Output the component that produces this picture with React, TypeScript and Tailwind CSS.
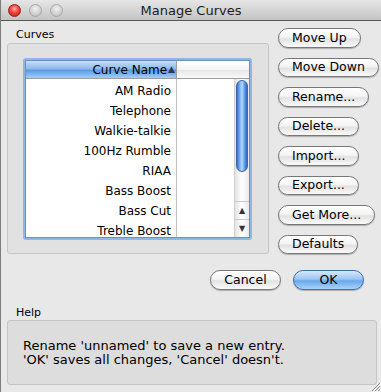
import React from "react"

const curves = ["AM Radio", "Telephone", "Walkie-talkie", "100Hz Rumble", "RIAA", "Bass Boost", "Bass Cut", "Treble Boost"]
const sideButtons = ["Move Up", "Move Down", "Rename...", "Delete...", "Import...", "Export...", "Get More...", "Defaults"]

function AquaButton({ label, primary = false, className = "" }: { label: string; primary?: boolean; className?: string }) {
  return (
    <button
      className={
        "h-[20px] whitespace-nowrap rounded-full border px-[13px] text-[12.5px] leading-none text-black shadow-[0_1px_1px_rgba(0,0,0,0.25)] " +
        (primary
          ? "border-[#3f6ea8] bg-[linear-gradient(to_bottom,#d6e8fb_0%,#9cc6f2_45%,#6aa8ea_55%,#a9d3fb_100%)] "
          : "border-[#777] bg-[linear-gradient(to_bottom,#ffffff_0%,#f4f4f4_45%,#e2e2e2_55%,#fafafa_100%)] ") +
        className
      }
    >
      {label}
    </button>
  )
}

function Light({ red = false }: { red?: boolean }) {
  return (
    <div
      className={
        "h-[13px] w-[13px] rounded-full border " +
        (red
          ? "border-[#9a1d1d] bg-[radial-gradient(circle_at_50%_35%,#ffb0a8_0%,#f2453a_45%,#b51a14_100%)]"
          : "border-[#a8a8a8] bg-[radial-gradient(circle_at_50%_35%,#f2f2f2_0%,#d4d4d4_50%,#b8b8b8_100%)]")
      }
    />
  )
}

export default function App() {
  return (
    <div
      className="relative h-[392px] w-[381px] overflow-hidden border-l border-[#7c7c7c] bg-[#e8e8e8] text-black"
      style={{ fontFamily: '"DejaVu Sans", "Liberation Sans", sans-serif' }}
    >
      {/* Title bar */}
      <div className="relative flex h-[21px] items-center border-b border-[#575757] bg-[linear-gradient(to_bottom,#e6e6e6,#c4c4c4)]">
        <div className="ml-[7px] flex gap-[8px]">
          <Light red />
          <Light />
          <Light />
        </div>
        <div className="absolute inset-x-0 top-[3px] text-center text-[13px] leading-[15px] text-[#1c1c1c]">Manage Curves</div>
      </div>

      <div className="flex h-[233px] pl-[6px]">
        {/* Curves group */}
        <div className="w-[262px]">
          <div className="ml-[9px] mt-[5px] h-[17px] text-[11px] leading-[17px]">Curves</div>
          <div className="h-[211px] rounded-[3px] border border-[#c6c6c6] bg-[#e1e1e1] px-[15px] pt-[14px]">
            <div className="h-[182px] w-[229px] rounded-[3px] bg-[#8fb6e4] p-[2px]">
              <div className="flex h-full flex-col border border-[#6e8fb8] bg-white">
                {/* Header */}
                <div className="flex h-[18px] border-b border-[#9e9e9e]">
                  <div className="flex w-[151px] items-center justify-end border-r border-[#9e9e9e] bg-[linear-gradient(to_bottom,#c8def6_0%,#8dbaec_45%,#5c9be3_55%,#a5cdf7_100%)] pr-[1px] text-[12px] leading-none">
                    Curve Name<span className="ml-[1px] text-[9px] text-[#2a3a55]">▲</span>
                  </div>
                  <div className="flex-1 bg-[linear-gradient(to_bottom,#ffffff,#f3f3f3_50%,#e6e6e6_51%,#f8f8f8)]" />
                </div>
                {/* Rows */}
                <div className="flex flex-1 overflow-hidden">
                  <div className="w-[151px] border-r border-[#c3c3c3] pt-[2px]">
                    {curves.map((c) => (
                      <div key={c} className="h-[20px] whitespace-nowrap pr-[5px] text-right text-[12px] leading-[20px]">
                        {c}
                      </div>
                    ))}
                  </div>
                  <div className="flex-1" />
                  {/* Scrollbar */}
                  <div className="flex w-[15px] flex-col border-l border-[#d0d0d0] bg-[linear-gradient(to_right,#e4e4e4,#fbfbfb_40%,#fbfbfb_60%,#e8e8e8)]">
                    <div className="mx-auto mt-[1px] h-[92px] w-[12px] rounded-full border border-[#3a6aa8] bg-[linear-gradient(to_right,#2f6fd0_0%,#8cc0f5_35%,#b5daff_50%,#5f9ee8_75%,#2b66c2_100%)]" />
                    <div className="flex-1" />
                    <div className="flex h-[18px] items-center justify-center border-t border-[#c8c8c8] text-[8px] text-[#333]">▲</div>
                    <div className="flex h-[18px] items-center justify-center border-t border-[#c8c8c8] text-[8px] text-[#333]">▼</div>
                  </div>
                </div>
              </div>
            </div>
          </div>
        </div>

        {/* Side buttons */}
        <div className="ml-[9px] mt-[7px] flex flex-col items-start gap-[10px]">
          {sideButtons.map((b) => (
            <AquaButton key={b} label={b} />
          ))}
        </div>
      </div>

      {/* Cancel / OK */}
      <div className="mt-[16px] flex gap-[12px] pl-[209px]">
        <AquaButton label="Cancel" className="w-[71px] px-0" />
        <AquaButton label="OK" primary className="w-[71px] px-0" />
      </div>

      {/* Help */}
      <div className="ml-[15px] mt-[16px] h-[14px] text-[11px] leading-[14px]">Help</div>
      <div className="ml-[6px] h-[65px] w-[370px] rounded-[3px] border border-[#c4c4c4] bg-[#dddddd] pl-[15px] pt-[18px] text-[13px] leading-[14px]">
        <div>Rename 'unnamed' to save a new entry.</div>
        <div>'OK' saves all changes, 'Cancel' doesn't.</div>
      </div>

      {/* Resize grip */}
      <svg className="absolute bottom-0 right-0" width="12" height="12" viewBox="0 0 12 12">
        <path d="M11 3 L3 11 M11 6 L6 11 M11 9 L9 11" stroke="#8a8a8a" strokeWidth="1" />
        <path d="M12 4 L4 12 M12 7 L7 12 M12 10 L10 12" stroke="#ffffff" strokeWidth="1" />
      </svg>
    </div>
  )
}
